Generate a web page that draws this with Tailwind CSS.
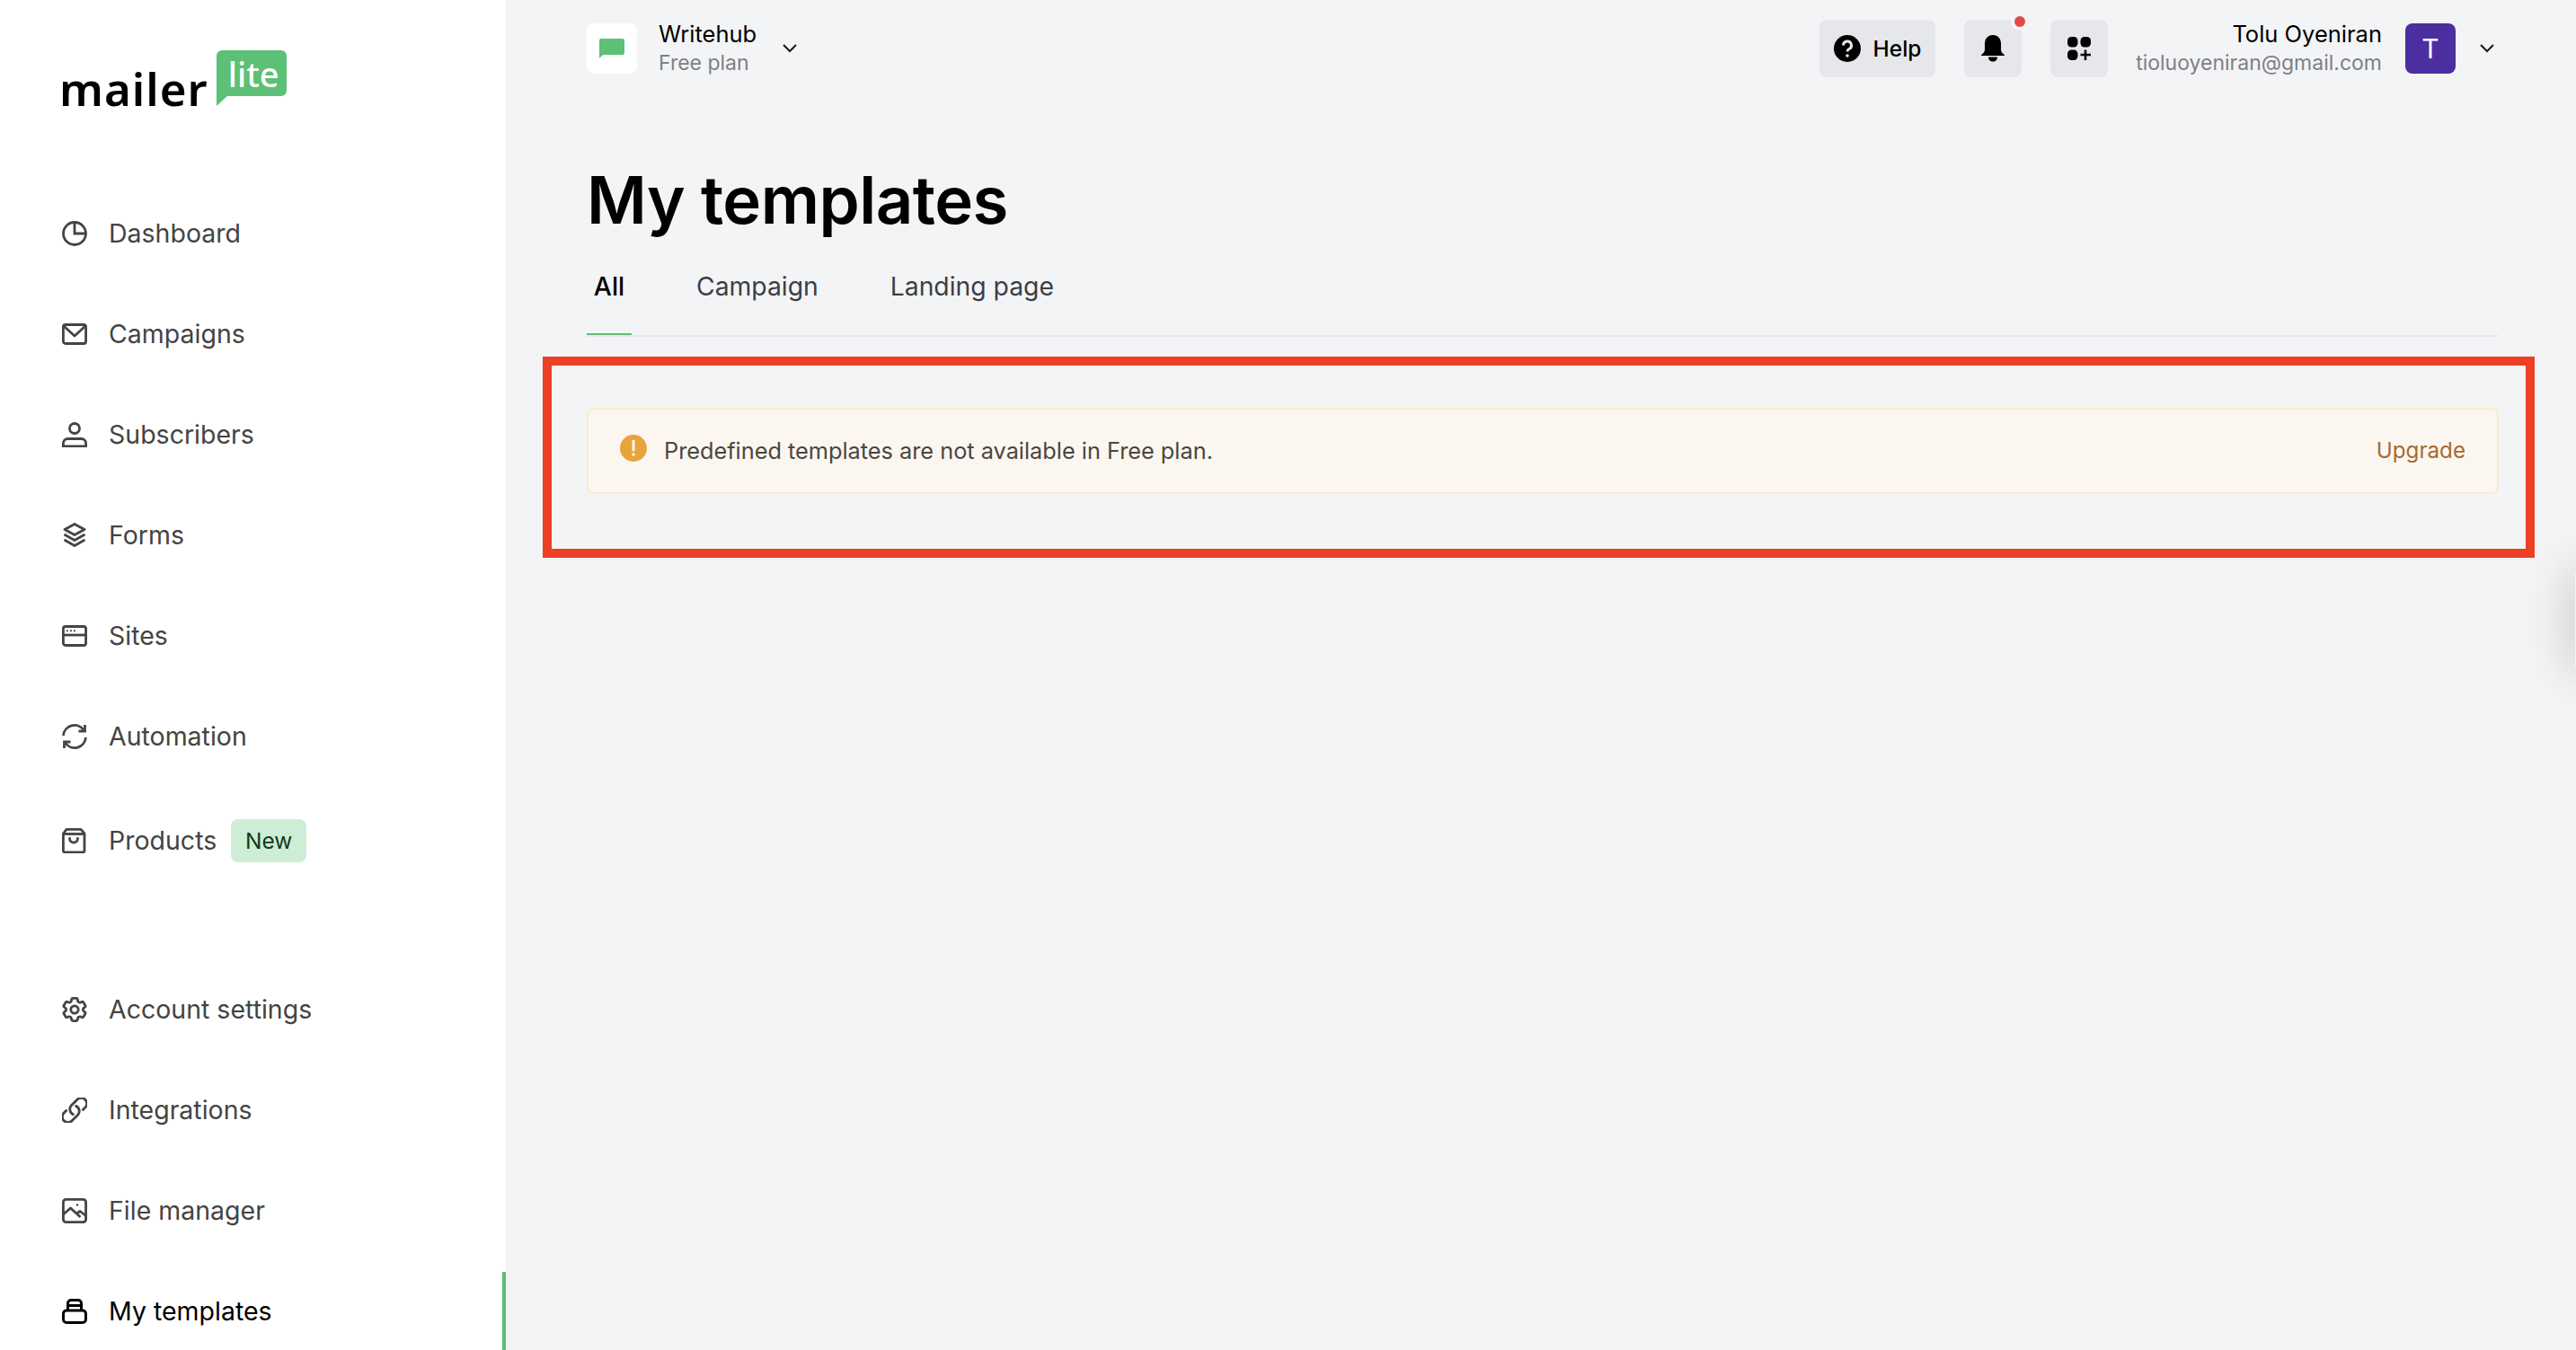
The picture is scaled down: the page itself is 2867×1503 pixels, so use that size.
<!DOCTYPE html>
<html lang="en">
<head>
    <meta charset="UTF-8">
    <title>My templates</title>
    <script src="https://cdn.jsdelivr.net/npm/@tailwindcss/browser@4"></script>
</head>
<body class="bg-[#f3f4f6] font-['Inter',sans-serif] h-[1503px] overflow-hidden relative">
    <div class="flex h-full">
        <!-- sidebar -->
        <aside class="w-[563px] h-full bg-white flex flex-col shrink-0 pl-[69px] text-[#444444] text-[28.5px] relative">
            <div class="h-[204px] shrink-0 pt-[56px]">
                <div class="flex items-start -ml-[3px]">
                    <span class="font-['Noto_Sans',sans-serif] font-semibold text-black text-[51px] leading-[62px] tracking-[1px] mt-[11px]">mailer</span>
                    <div class="ml-[9px] w-[78px] h-[62px] relative">
                        <svg viewBox="0 0 78 62" class="w-[78px] h-[62px]"><path d="M6 0H72a6 6 0 0 1 6 6V45a6 6 0 0 1-6 6H12L0 62V6a6 6 0 0 1 6-6z" fill="#5cc076"/></svg>
                        <span class="absolute left-[13px] top-[6px] font-['Noto_Sans',sans-serif] font-medium text-white text-[38px] leading-[40px]">lite</span>
                    </div>
                </div>
            </div>

            <nav class="flex flex-col shrink-0">
                <a class="flex items-center h-[112px] gap-[24px]">
                    <svg viewBox="0 0 28 28" class="w-[28px] h-[28px]" fill="none" stroke="currentColor" stroke-width="2.8"><circle cx="14" cy="14" r="12.5"/><path d="M14 2v12h12"/></svg>
                    Dashboard
                </a>
                <a class="flex items-center h-[112px] gap-[24px]">
                    <svg viewBox="0 0 28 28" class="w-[28px] h-[28px]" fill="none" stroke="currentColor" stroke-width="2.8" stroke-linejoin="round"><rect x="1.4" y="3.5" width="25.2" height="21" rx="2.5"/><path d="M2 5l12 11L26 5"/></svg>
                    Campaigns
                </a>
                <a class="flex items-center h-[112px] gap-[24px]">
                    <svg viewBox="0 0 28 28" class="w-[28px] h-[28px]" fill="none" stroke="currentColor" stroke-width="2.8"><circle cx="14" cy="7" r="5.5"/><path d="M1.400 27v-3.500a5 5 0 0 1 5-5h15.200a5 5 0 0 1 5 5V27z"/></svg>
                    Subscribers
                </a>
                <a class="flex items-center h-[112px] gap-[24px]">
                    <svg viewBox="0 0 28 28" class="w-[28px] h-[28px]" fill="none" stroke="currentColor" stroke-width="2.8" stroke-linejoin="round"><path d="M14 1.500L25 7.500 14 13.500 3 7.500z"/><path d="M2.500 13l11.500 6.500L25.500 13"/><path d="M2.500 19l11.500 6.500L25.500 19"/></svg>
                    Forms
                </a>
                <a class="flex items-center h-[112px] gap-[24px]">
                    <svg viewBox="0 0 28 28" class="w-[28px] h-[28px]" fill="none" stroke="currentColor" stroke-width="2.800"><rect x="1.400" y="3.500" width="25.200" height="21" rx="2.500"/><path d="M1.400 13h25.200"/><path d="M5 8.200h1.800M9 8.200h1.800M13 8.200h1.800" stroke-width="2"/></svg>
                    Sites
                </a>
                <a class="flex items-center h-[112px] gap-[24px]">
                    <svg viewBox="0 0 28 28" class="w-[28px] h-[28px]" fill="none" stroke="currentColor" stroke-width="2.800"><path d="M1.500 13A12.500 12.500 0 0 1 24 6.500"/><path d="M26.500 15A12.500 12.500 0 0 1 4 21.500"/><path d="M25.500 1v7h-7M2.500 27v-7h7"/></svg>
                    Automation
                </a>
                <a class="flex items-center h-[120px] gap-[24px]">
                    <svg viewBox="0 0 28 28" class="w-[28px] h-[28px]" fill="none" stroke="currentColor" stroke-width="2.800" stroke-linejoin="round"><path d="M1.400 6L5 1.400h16L25 6v19a2 2 0 0 1-2 2H3.400a2 2 0 0 1-2-2z"/><path d="M1.400 6.500H25"/><path d="M8.500 11.500a4.500 4.500 0 0 0 9 0" stroke-linecap="round"/></svg>
                    <span class="flex items-center gap-[16px]">Products
                        <span class="h-[48px] w-[84px] rounded-[8px] bg-[#ceedd5] text-[#113a1f] text-[24.5px] flex items-center justify-center">New</span>
                    </span>
                </a>
            </nav>

            <nav class="flex flex-col mt-[72px] shrink-0">
                <a class="flex items-center h-[112px] gap-[24px]">
                    <svg viewBox="2 2 20 20" class="w-[28px] h-[28px]" fill="none" stroke="currentColor" stroke-width="2" stroke-linejoin="round"><path d="M9.594 3.940c.09-.542.56-.94 1.110-.94h2.593c.55 0 1.020.398 1.110.94l.213 1.281c.063.374.313.686.645.870.074.040.147.083.220.127.325.196.720.257 1.075.124l1.217-.456a1.125 1.125 0 0 1 1.370.490l1.296 2.247a1.125 1.125 0 0 1-.260 1.431l-1.003.827c-.293.241-.438.613-.430.992a7.723 7.723 0 0 1 0 .255c-.008.378.137.750.430.991l1.004.827c.424.350.534.955.260 1.430l-1.298 2.247a1.125 1.125 0 0 1-1.369.491l-1.217-.456c-.355-.133-.750-.072-1.076.124a6.470 6.470 0 0 1-.220.128c-.331.183-.581.495-.644.869l-.213 1.281c-.09.543-.56.940-1.110.940h-2.594c-.55 0-1.019-.398-1.110-.940l-.213-1.281c-.062-.374-.312-.686-.644-.870a6.520 6.520 0 0 1-.220-.127c-.325-.196-.720-.257-1.076-.124l-1.217.456a1.125 1.125 0 0 1-1.369-.490l-1.297-2.247a1.125 1.125 0 0 1 .260-1.431l1.004-.827c.292-.240.437-.613.430-.991a6.932 6.932 0 0 1 0-.255c.007-.380-.138-.751-.430-.992l-1.004-.827a1.125 1.125 0 0 1-.260-1.430l1.297-2.247a1.125 1.125 0 0 1 1.370-.491l1.216.456c.356.133.751.072 1.076-.124.072-.044.146-.086.220-.128.332-.183.582-.495.644-.869l.214-1.280Z"/><circle cx="12" cy="12" r="3"/></svg>
                    Account settings
                </a>
                <a class="flex items-center h-[112px] gap-[24px]">
                    <svg viewBox="2 2 20 20" class="w-[28px] h-[28px]" fill="none" stroke="currentColor" stroke-width="2" stroke-linecap="round" stroke-linejoin="round"><path d="M13.190 8.688a4.500 4.500 0 0 1 1.242 7.244l-4.500 4.500a4.500 4.500 0 0 1-6.364-6.364l1.757-1.757m13.350-.622 1.757-1.757a4.500 4.500 0 0 0-6.364-6.364l-4.500 4.500a4.500 4.500 0 0 0 1.242 7.244"/></svg>
                    Integrations
                </a>
                <a class="flex items-center h-[112px] gap-[24px]">
                    <svg viewBox="0 0 28 28" class="w-[28px] h-[28px]" fill="none" stroke="currentColor" stroke-width="2.800" stroke-linejoin="round"><rect x="1.400" y="1.400" width="25.200" height="25.200" rx="3"/><path d="M1.500 18l8-7 11 10"/><path d="M17 16.500l3-2 6.500 5"/><circle cx="17" cy="7.500" r="1.200" fill="currentColor" stroke="none"/></svg>
                    File manager
                </a>
                <a class="flex items-center h-[112px] gap-[24px] text-black relative">
                    <svg viewBox="0 0 28 28" class="w-[28px] h-[28px]" fill="none" stroke="currentColor" stroke-width="3"><path d="M6.500 13V5a3.500 3.500 0 0 1 3.500-3.500h8a3.500 3.500 0 0 1 3.500 3.500v8"/><path d="M6 7.500h16"/><rect x="1.500" y="13" width="25" height="13.500" rx="3.500"/></svg>
                    My templates
                    <span class="absolute right-0 top-[12px] h-[100px] w-[4px] bg-[#5cc076]"></span>
                </a>
            </nav>
        </aside>

        <!-- main -->
        <main class="flex-1 pl-[90px] pr-[86px]">
            <header class="h-[108px] flex items-center justify-between pr-[5px]">
                <div class="flex items-center">
                    <div class="w-[56px] h-[56px] bg-white rounded-[8px] flex items-center justify-center">
                        <svg viewBox="0 0 28 22" class="w-[28px] h-[22px]"><path d="M2 0H26a2 2 0 0 1 2 2V16a2 2 0 0 1-2 2H4L0 22V2a2 2 0 0 1 2-2z" fill="#5cc076"/></svg>
                    </div>
                    <div class="ml-[24px] w-[138px]">
                        <div class="text-[25.5px] leading-[33px] text-black">Writehub</div>
                        <div class="text-[23px] leading-[33px] text-[#7e8086]">Free plan</div>
                    </div>
                    <svg viewBox="0 0 16 10" class="w-[16px] h-[10px]" fill="none" stroke="#1a1a1a" stroke-width="2"><path d="M1 1l7 7 7-7"/></svg>
                </div>
                <div class="flex items-center">
                    <button class="h-[64px] w-[129px] rounded-[8px] bg-[#e6e7eb] flex items-center justify-center gap-[14px] text-black text-[24.5px] font-medium">
                        <svg viewBox="0 0 30 30" class="w-[30px] h-[30px]"><circle cx="15" cy="15" r="15" fill="#000"/><path d="M10.500 11.500a4.500 4.500 0 1 1 6.500 4c-1.300.7-2 1.500-2 3" fill="none" stroke="#e6e7eb" stroke-width="3"/><circle cx="15" cy="23" r="1.800" fill="#e6e7eb"/></svg>
                        Help
                    </button>
                    <button class="relative ml-[32px] h-[64px] w-[64px] rounded-[8px] bg-[#e6e7eb] flex items-center justify-center">
                        <svg viewBox="0 0 26 30" class="w-[26px] h-[30px]" fill="#000"><path d="M13 0c6 0 9 4.500 9 9.500v6.500c0 2.500 1.500 4.500 3.300 5.500.8.400.9 1.500 0 1.500H.7c-.9 0-.8-1.100 0-1.500C2.500 20.500 4 18.500 4 16V9.500C4 4.500 7 0 13 0z"/><path d="M8 24.500h10c0 3-2 5-5 5s-5-2-5-5z"/></svg>
                        <span class="absolute -right-[8px] -top-[8px] w-[20px] h-[20px] rounded-full bg-[#f3f4f6] flex items-center justify-center">
                            <span class="w-[12px] h-[12px] rounded-full bg-[#e14b45]"></span>
                        </span>
                    </button>
                    <button class="ml-[32px] h-[64px] w-[64px] rounded-[8px] bg-[#e6e7eb] flex items-center justify-center">
                        <svg viewBox="0 0 26 26" class="w-[26px] h-[26px]" fill="#000"><rect x="0" y="0" width="11.500" height="11.500" rx="4.500"/><rect x="14.500" y="0" width="11.500" height="11.500" rx="4.500"/><rect x="0" y="14.500" width="11.500" height="11.500" rx="4.500"/><path d="M18.700 14.500h2.600v4.200H26v2.600h-4.700V26h-2.600v-4.700H14.500v-2.600h4.200z"/></svg>
                    </button>
                    <div class="ml-[28px] text-right w-[277px]">
                        <div class="text-[25.5px] leading-[33px] text-black">Tolu Oyeniran</div>
                        <div class="text-[23px] leading-[33px] text-[#7e8086]">tioluoyeniran@gmail.com</div>
                    </div>
                    <div class="ml-[26px] w-[56px] h-[56px] rounded-[8px] bg-[#4b2ea0] text-white text-[30px] flex items-center justify-center">T</div>
                    <svg viewBox="0 0 16 10" class="ml-[27px] w-[16px] h-[10px]" fill="none" stroke="#1a1a1a" stroke-width="2"><path d="M1 1l7 7 7-7"/></svg>
                </div>
            </header>

            <h1 class="mt-[75px] text-[72.5px] leading-[80px] font-semibold text-black tracking-[-0.5px]">My templates</h1>

            <div class="mt-[24px] flex border-b-2 border-[#e7e8eb] text-[28.3px] text-[#3c3e44] h-[88px]">
                <div class="w-[50px] h-[86px] border-b-2 border-[#5cc076] text-black font-medium text-center leading-[64px]">All</div>
                <div class="ml-[72px] leading-[64px]">Campaign</div>
                <div class="ml-[80px] leading-[64px]">Landing page</div>
            </div>

            <div class="mt-[79px] h-[96px] rounded-[8px] border-2 border-[#faebcd] bg-[#fbf7f0] flex items-center justify-between pl-[35px] pr-[35px] text-[25.3px]">
                <div class="flex items-center gap-[19px] text-[#4b4640]">
                    <svg viewBox="0 0 30 30" class="w-[30px] h-[30px] -mt-[6px]"><circle cx="15" cy="15" r="15" fill="#e9a33d"/><path d="M15 7v10" stroke="#fbf7f0" stroke-width="3" stroke-linecap="round"/><circle cx="15" cy="22" r="1.800" fill="#fbf7f0"/></svg>
                    Predefined templates are not available in Free plan.
                </div>
                <a class="text-[#a86a2f] text-[24.2px]">Upgrade</a>
            </div>
        </main>
    </div>

    <!-- annotation box over the alert -->
    <div class="absolute left-[604px] top-[397px] w-[2217px] h-[224px] border-[10px] border-[#ec3f24]"></div>
    <!-- widget peeking in at the right edge -->
    <div class="absolute left-[2866px] top-[632px] w-[20px] h-[116px] rounded-[8px] bg-[#f3f4f6] shadow-[0_0_50px_rgba(0,0,0,0.3)]"></div>
</body>
</html>
